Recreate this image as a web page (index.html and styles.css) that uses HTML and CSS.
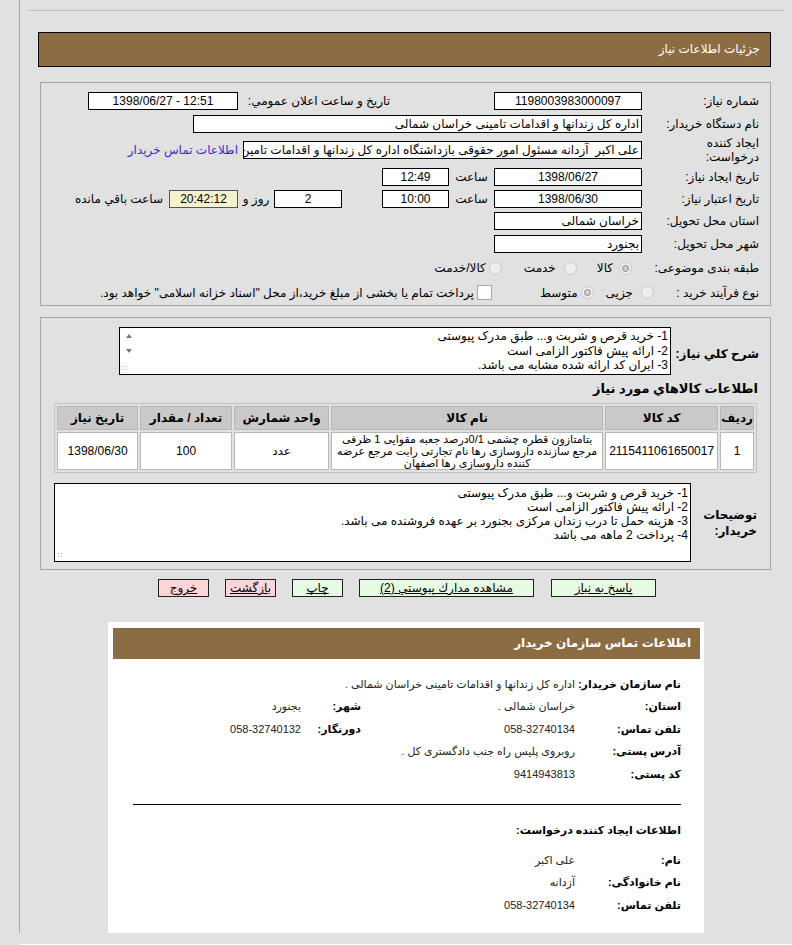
FILE: index.html
```html
<!DOCTYPE html>
<html lang="fa" dir="rtl">
<head>
    <meta charset="UTF-8">
    <title>جزئیات اطلاعات نیاز</title>
    <link rel="stylesheet" href="styles.css">
</head>
<body>
<div class="page">
    <div class="top-rule"></div>
    <div class="title-bar">جزئیات اطلاعات نیاز</div>

    <!-- مشخصات اصلی نیاز -->
    <div class="panel info-panel">
        <div class="row r1">
            <div class="lbl">شماره نیاز:</div>
            <div class="box w148 center">1198003983000097</div>
            <div class="lbl2">تاریخ و ساعت اعلان عمومي:</div>
            <div class="box w150 center" dir="ltr">1398/06/27 - 12:51</div>
        </div>
        <div class="row r2">
            <div class="lbl">نام دستگاه خریدار:</div>
            <div class="box w449">اداره کل زندانها و اقدامات تامینی خراسان شمالی</div>
        </div>
        <div class="row r3">
            <div class="lbl two-line">ایجاد کننده<br>درخواست:</div>
            <div class="box w399">علی اکبر&nbsp; آزدانه مسئول امور حقوقی بازداشتگاه اداره کل زندانها و اقدامات تامین</div>
            <a class="contact-link" href="#">اطلاعات تماس خریدار</a>
        </div>
        <div class="row r4">
            <div class="lbl">تاریخ ایجاد نیاز:</div>
            <div class="box w148 center">1398/06/27</div>
            <div class="mid">ساعت</div>
            <div class="box w67 center">12:49</div>
        </div>
        <div class="row r5">
            <div class="lbl">تاریخ اعتبار نیاز:</div>
            <div class="box w148 center">1398/06/30</div>
            <div class="mid">ساعت</div>
            <div class="box w67 center">10:00</div>
            <div class="box w68 center days">2</div>
            <div class="mid small">روز و</div>
            <div class="box w69 center remain">20:42:12</div>
            <div class="after">ساعت باقي مانده</div>
        </div>
        <div class="row r6">
            <div class="lbl">استان محل تحویل:</div>
            <div class="box w148">خراسان شمالی</div>
        </div>
        <div class="row r7">
            <div class="lbl">شهر محل تحویل:</div>
            <div class="box w148">بجنورد</div>
        </div>
        <div class="row r8">
            <div class="lbl">طبقه بندی موضوعی:</div>
            <span class="opt o1"><span class="radio on"></span><span class="opt-text">کالا</span></span>
            <span class="opt o2"><span class="radio"></span><span class="opt-text">خدمت</span></span>
            <span class="opt o3"><span class="radio"></span><span class="opt-text">کالا/خدمت</span></span>
        </div>
        <div class="row r9">
            <div class="lbl short">نوع فرآیند خرید :</div>
            <span class="opt p1"><span class="radio"></span><span class="opt-text">جزیی</span></span>
            <span class="opt p2"><span class="radio on"></span><span class="opt-text">متوسط</span></span>
            <span class="opt p3"><span class="check"></span><span class="opt-text">پرداخت تمام یا بخشی از مبلغ خرید،از محل "اسناد خزانه اسلامی" خواهد بود.</span></span>
        </div>
    </div>

    <!-- شرح و کالاها -->
    <div class="panel goods-panel">
        <div class="desc-row">
            <div class="bold-lbl desc-lbl">شرح کلي نیاز:</div>
            <div class="textarea ta-desc">
                <div class="ta-text">
                    1- خرید قرص و شربت و... طبق مدرک پیوستی<br>
                    2- ارائه پیش فاکتور الزامی است<br>
                    3- ایران کد ارائه شده مشابه می باشد.
                </div>
                <div class="ta-bar">
                    <span class="arrow up"></span>
                    <span class="arrow down"></span>
                    <span class="grip"></span>
                </div>
            </div>
        </div>
        <div class="section-title">اطلاعات کالاهاي مورد نیاز</div>
        <table class="goods">
            <tr>
                <th class="c-idx">ردیف</th>
                <th class="c-code">کد کالا</th>
                <th class="c-name">نام کالا</th>
                <th class="c-unit">واحد شمارش</th>
                <th class="c-qty">تعداد / مقدار</th>
                <th class="c-date">تاریخ نیاز</th>
            </tr>
            <tr>
                <td>1</td>
                <td>2115411061650017</td>
                <td class="name">بتامتازون قطره چشمی 0/1درصد جعبه مقوایی 1 ظرفی مرجع سازنده داروسازی رها نام تجارتی رابت مرجع عرضه کننده داروسازی رها اصفهان</td>
                <td>عدد</td>
                <td>100</td>
                <td>1398/06/30</td>
            </tr>
        </table>
        <div class="notes-row">
            <div class="bold-lbl notes-lbl">توضیحات<br>خریدار:</div>
            <div class="textarea ta-notes">
                <div class="ta-text">
                    1- خرید قرص و شربت و... طبق مدرک پیوستی<br>
                    2- ارائه پیش فاکتور الزامی است<br>
                    3- هزینه حمل تا درب زندان مرکزی بجنورد بر عهده فروشنده می باشد.<br>
                    4- پرداخت 2 ماهه می باشد
                </div>
                <div class="ta-bar plain">
                    <span class="grip"></span>
                </div>
            </div>
        </div>
    </div>

    <div class="buttons">
        <a class="btn green b-reply" href="#">پاسخ به نیاز</a>
        <a class="btn green b-docs" href="#">مشاهده مدارك پيوستي (2)</a>
        <a class="btn green b-small" href="#">چاپ</a>
        <a class="btn pink b-small" href="#">بازگشت</a>
        <a class="btn pink b-small" href="#">خروج</a>
    </div>

    <!-- اطلاعات تماس -->
    <div class="contact">
        <div class="contact-head">اطلاعات تماس سازمان خریدار</div>
        <div class="contact-body">
            <div class="c-row">
                <div class="c-lbl">نام سازمان خریدار:</div>
                <div class="c-val wide">اداره کل زندانها و اقدامات تامینی خراسان شمالی .</div>
            </div>
            <div class="c-row">
                <div class="c-lbl">استان:</div>
                <div class="c-val">خراسان شمالی .</div>
                <div class="c-lbl2">شهر:</div>
                <div class="c-val2">بجنورد</div>
            </div>
            <div class="c-row">
                <div class="c-lbl">تلفن تماس:</div>
                <div class="c-val">058-32740134</div>
                <div class="c-lbl2">دورنگار:</div>
                <div class="c-val2">058-32740132</div>
            </div>
            <div class="c-row">
                <div class="c-lbl">آدرس پستی:</div>
                <div class="c-val wide">روبروی پلیس راه جنب دادگستری کل .</div>
            </div>
            <div class="c-row">
                <div class="c-lbl">کد پستی:</div>
                <div class="c-val wide">9414943813</div>
            </div>
            <hr class="c-rule">
            <div class="c-row c-title">
                <div class="c-lbl wide">اطلاعات ایجاد کننده درخواست:</div>
            </div>
            <div class="c-row first-after">
                <div class="c-lbl">نام:</div>
                <div class="c-val wide">علی اکبر</div>
            </div>
            <div class="c-row">
                <div class="c-lbl">نام خانوادگی:</div>
                <div class="c-val wide">آزدانه</div>
            </div>
            <div class="c-row">
                <div class="c-lbl">تلفن تماس:</div>
                <div class="c-val wide">058-32740134</div>
            </div>
        </div>
    </div>
</div>
<div class="footer"></div>
</body>
</html>
```

FILE: styles.css
```css
body {
    margin: 0;
    background: #e1e1e1;
    font-family: "Liberation Sans", "DejaVu Sans", sans-serif;
    font-size: 12px;
    color: #000;
}
.page {
    margin-left: 19px;
    border-left: 1px solid #a9a9a9;
    padding-top: 10px;
}
.top-rule {
    border-top: 1px dotted #9a9a9a;
    margin: 0 9px 0 8px;
}
.title-bar {
    margin: 21px 21px 0 18px;
    height: 33px;
    line-height: 33px;
    border: 1px solid #000;
    background: #8c6c42;
    color: #fff;
    padding-right: 10px;
}
.panel {
    margin: 15px 21px 0 20px;
    border: 1px solid #a6a6a6;
}
.info-panel {
    padding: 7px 11px 1px 0;
}
.row {
    display: flex;
    align-items: center;
}
.r1 { height: 22px; }
.r2 { height: 23px; }
.r3 { height: 30px; }
.r4 { height: 24px; }
.r5 { height: 20px; }
.r6 { height: 24px; }
.r7 { height: 22px; }
.r8 { height: 26px; }
.r9 { height: 23px; }
.lbl {
    width: 117px;
    flex-shrink: 0;
}
.lbl.short {
    width: 105px;
}
.two-line {
    line-height: 14px;
}
.lbl2 {
    width: 152px;
    margin-right: 104px;
}
.box {
    box-sizing: border-box;
    height: 18px;
    line-height: 16px;
    border: 1px solid #000;
    background: #fff;
    padding: 0 2px;
    overflow: hidden;
    white-space: nowrap;
    flex-shrink: 0;
}
.center { text-align: center; }
.w148 { width: 148px; }
.w150 { width: 150px; }
.w449 { width: 449px; }
.w399 { width: 399px; }
.w67 { width: 67px; }
.w68 { width: 68px; }
.w69 { width: 69px; }
.days { margin-right: 40px; }
.remain {
    background: #f4f2cf;
    border-color: #555;
}
.mid {
    width: 45px;
    text-align: center;
}
.mid.small {
    width: 36px;
}
.after {
    margin-right: 6px;
}
.contact-link {
    margin-right: 5px;
    color: #3131c8;
    text-decoration: none;
}
.opt {
    display: flex;
    align-items: center;
}
.radio {
    width: 11px;
    height: 11px;
    border-radius: 50%;
    border: 1px solid #c9c9c9;
    background: #eeeeee;
    position: relative;
    flex-shrink: 0;
}
.radio.on::after {
    content: "";
    position: absolute;
    left: 2px;
    top: 2px;
    width: 5px;
    height: 5px;
    border-radius: 50%;
    border: 1px solid #8a8a8a;
    background: #d0d0d0;
}
.check {
    width: 13px;
    height: 13px;
    border: 1px solid #a8a8a8;
    background: #fff;
    flex-shrink: 0;
}
.opt-text { margin-right: 6px; }
.o1 { margin-right: 10px; }
.o2 { margin-right: 20px; }
.o2 .opt-text { margin-right: 8px; }
.o3 { margin-right: 22px; }
.o3 .opt-text { margin-right: 3px; }
.p1 { margin-right: 0; }
.p1 .opt-text { margin-right: 8px; }
.p2 { margin-right: 12px; }
.p2 .opt-text { margin-right: 3px; }
.p3 { margin-right: 48px; }
.p3 .opt-text { margin-right: 3px; }

/* پنل دوم */
.goods-panel {
    margin-top: 11px;
    padding: 9px 11px 7px 14px;
}
.bold-lbl {
    font-weight: bold;
}
.desc-row {
    display: flex;
    align-items: center;
}
.desc-lbl {
    width: 88px;
    flex-shrink: 0;
    white-space: nowrap;
    padding-top: 6px;
}
.textarea {
    box-sizing: border-box;
    border: 1px solid #000;
    background: #fff;
    display: flex;
    flex-shrink: 0;
}
.ta-desc {
    width: 552px;
    height: 48px;
}
.ta-notes {
    width: 637px;
    height: 79px;
}
.ta-text {
    flex: 1;
    padding: 1px 2px 0 0;
    line-height: 14.5px;
    white-space: nowrap;
    overflow: hidden;
}
.ta-notes .ta-text {
    padding-top: 2px;
    line-height: 14px;
}
.ta-bar {
    width: 16px;
    position: relative;
}
.arrow {
    position: absolute;
    left: 6px;
    width: 0;
    height: 0;
    border-left: 3px solid transparent;
    border-right: 3px solid transparent;
}
.arrow.up {
    top: 6px;
    border-bottom: 4px solid #777;
}
.arrow.down {
    top: 21px;
    border-top: 4px solid #777;
}
.grip {
    position: absolute;
    left: 2px;
    bottom: 2px;
    width: 7px;
    height: 7px;
    background-image: radial-gradient(#aaa 0.7px, transparent 0.9px);
    background-size: 3px 3px;
}
.section-title {
    font-weight: bold;
    font-size: 13px;
    height: 28px;
    line-height: 28px;
    padding-right: 1px;
}
.goods {
    width: 703px;
    margin-right: 2px;
    border-collapse: separate;
    border-spacing: 2px;
    border: 1px solid #c4c4c4;
    background: #e1e1e1;
}
.goods th {
    background: #c9c9c9;
    border: 1px solid #b8b8b8;
    height: 22px;
    font-weight: bold;
    text-align: center;
    padding: 0;
}
.goods td {
    background: #fff;
    border: 1px solid #b8b8b8;
    height: 36px;
    text-align: center;
    padding: 0 3px;
}
.goods td.name {
    font-size: 11px;
    line-height: 12px;
}
.c-idx { width: 25px; }
.c-code { width: 100px; }
.c-name { width: 270px; }
.c-unit { width: 93px; }
.c-qty { width: 90px; }
.notes-row {
    display: flex;
    align-items: center;
    margin-top: 10px;
}
.notes-lbl {
    width: 68px;
    line-height: 16px;
    padding-right: 2px;
    box-sizing: border-box;
    flex-shrink: 0;
}
.buttons {
    display: flex;
    justify-content: center;
    gap: 16px;
    margin-top: 9px;
    padding-left: 2px;
}
.btn {
    box-sizing: border-box;
    height: 18px;
    line-height: 16px;
    border: 1px solid #222;
    color: #000;
    text-align: center;
}
.green { background: #e7fbe4; }
.pink { background: #fcd5d9; }
.b-reply { width: 105px; margin-left: 1px; }
.b-docs { width: 175px; }
.b-small { width: 51px; }

/* کادر اطلاعات تماس */
.contact {
    box-sizing: border-box;
    width: 596px;
    margin: 25px auto 0;
    background: #fff;
    padding: 6px 4px 16px 5px;
}
.contact-head {
    height: 31px;
    line-height: 31px;
    background: #8c6c42;
    color: #fff;
    font-weight: bold;
    padding-right: 9px;
}
.contact-body {
    padding: 14px 19px 0 20px;
}
.c-row {
    display: grid;
    grid-template-columns: 106px 205px 60px 1fr;
    height: 22.5px;
    align-items: center;
}
.c-lbl {
    font-weight: bold;
    font-size: 11px;
    white-space: nowrap;
}
.c-lbl.wide {
    grid-column: 1 / 5;
}
.c-val,
.c-val2 {
    font-size: 11px;
    color: #222;
}
.c-val.wide {
    grid-column: 2 / 5;
}
.c-lbl2 {
    font-weight: bold;
    font-size: 11px;
    padding-right: 9px;
}
.c-val2 {
    padding-right: 9px;
}
.c-rule {
    border: 0;
    border-top: 1px solid #000;
    margin: 18px 0 0;
}
.c-title {
    margin-top: 15px;
}
.first-after {
    margin-top: 7px;
}
.footer {
    margin: 11px 0 0 20px;
    height: 20px;
    background: #fff;
}
```
